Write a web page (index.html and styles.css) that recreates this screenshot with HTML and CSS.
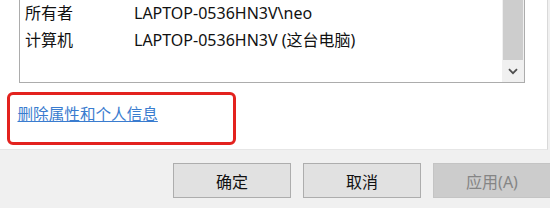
FILE: index.html
```html
<!DOCTYPE html>
<html lang="zh-CN">
<head>
<meta charset="utf-8">
<title>属性</title>
<link rel="stylesheet" href="styles.css">
</head>
<body>
<div class="panel">
  <div class="listbox">
    <div class="list">
      <div class="row"><span class="label">所有者</span><span class="value">LAPTOP-0536HN3V\neo</span></div>
      <div class="row"><span class="label">计算机</span><span class="value">LAPTOP-0536HN3V (这台电脑)</span></div>
    </div>
    <div class="scrollbar">
      <div class="thumb"></div>
      <div class="arrow">
        <svg width="10" height="7" viewBox="0 0 10 7"><path d="M1 1.2 L5 5.2 L9 1.2" fill="none" stroke="#4f4f4f" stroke-width="1.8"/></svg>
      </div>
    </div>
  </div>
  <div class="highlight">
    <a class="link" href="#">删除属性和个人信息</a>
  </div>
</div>
<div class="footer">
  <button class="btn">确定</button>
  <button class="btn">取消</button>
  <button class="btn btn-disabled" disabled>应用(A)</button>
</div>
</body>
</html>
```
FILE: styles.css
```css
html, body {
  margin: 0;
  padding: 0;
}
body {
  width: 550px;
  height: 208px;
  overflow: hidden;
  background: #f0f0f0;
  font-family: "Noto Sans", "Noto Sans CJK SC", sans-serif;
  font-size: 16px;
  color: #111;
}
.panel {
  display: flex;
  flex-direction: column;
  width: 548px;
  height: 150px;
  box-sizing: border-box;
  background: #fff;
  border-right: 1px solid #d9d9d9;
  border-bottom: 1px solid #e6e6e6;
}
.listbox {
  display: flex;
  margin-top: -20px;
  margin-left: 19px;
  width: 506px;
  height: 103px;
  box-sizing: border-box;
  border: 1px solid #acacac;
  background: #fff;
}
.list {
  flex: 1;
  padding: 19px 0 0 5px;
}
.row {
  display: flex;
  height: 27px;
  line-height: 27px;
  white-space: nowrap;
}
.label {
  width: 109px;
  flex: none;
}
.scrollbar {
  width: 22px;
  display: flex;
  flex-direction: column;
  background: #f0f0f0;
}
.thumb {
  flex: 1;
  margin: 0 1px 0 1px;
  background: #cdcdcd;
}
.arrow {
  height: 22px;
  display: flex;
  align-items: center;
  justify-content: center;
}
.highlight {
  margin: 9px 0 0 7px;
  width: 229px;
  height: 53px;
  box-sizing: border-box;
  border: 3.5px solid #e3221e;
  border-radius: 6px;
  padding: 7.5px 0 0 7.5px;
}
.link {
  display: block;
  font-size: 15.6px;
  line-height: 22px;
  color: #3a7ccf;
  text-decoration: underline;
  white-space: nowrap;
}
.footer {
  display: flex;
  gap: 12px;
  padding: 13px 0 0 173px;
}
.btn {
  flex: none;
  width: 118px;
  height: 35px;
  box-sizing: border-box;
  border: 1px solid #adadad;
  background: #e1e1e1;
  font-family: "Noto Sans", "Noto Sans CJK SC", sans-serif;
  font-size: 16px;
  color: #111;
  padding: 0;
  margin: 0;
}
.btn-disabled {
  background: #cccccc;
  border-color: #c4c4c4;
  color: #858585;
}
```
